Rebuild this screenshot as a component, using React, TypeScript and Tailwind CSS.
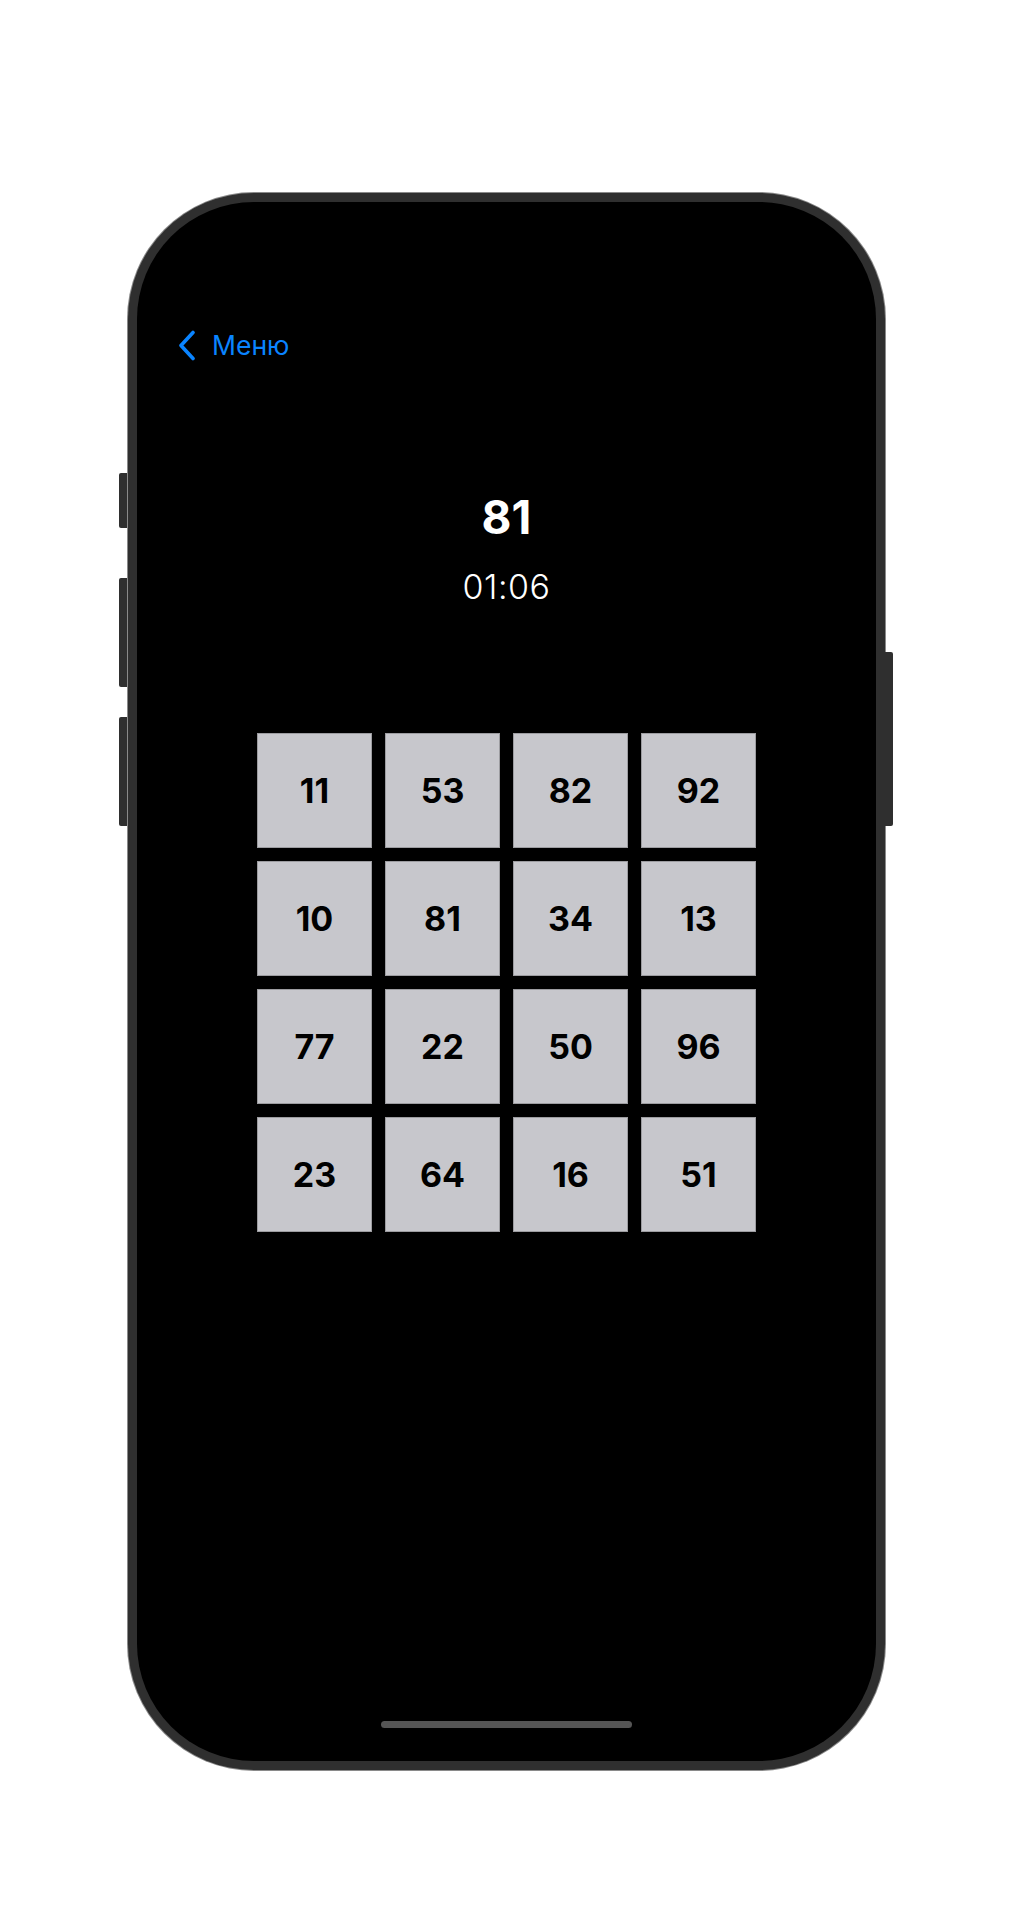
const cells = [11, 53, 82, 92, 10, 81, 34, 13, 77, 22, 50, 96, 23, 64, 16, 51];

export default function App() {
  return (
    <div className="w-[1012px] h-[1916px] bg-white pt-[193px] pl-[119px] flex items-start font-['Inter','Noto_Sans',sans-serif]">
      {/* left hardware buttons */}
      <div className="w-[8px] mr-[1px] pt-[280px] flex flex-col">
        <div className="h-[55px] rounded-l-[2px] bg-[#2f2f2f]" />
        <div className="mt-[50px] h-[109px] rounded-l-[2px] bg-[#2f2f2f]" />
        <div className="mt-[30px] h-[109px] rounded-l-[2px] bg-[#2f2f2f]" />
      </div>

      {/* phone body */}
      <div className="w-[757px] h-[1577px] rounded-[126px] bg-[#2f2f2f] p-[9px] shadow-[0_0_0_1px_#8a8a8a]">
        <div className="flex flex-col w-full h-full rounded-[117px] bg-black overflow-hidden">
          {/* nav */}
          <div className="mt-[123px] h-[40px] flex items-center pl-[41px] gap-[16px] text-[#0a84ff]">
            <svg width="18" height="31" viewBox="0 0 18 31" fill="none">
              <path d="M15 2.5 L3 15.5 L15 28.5" stroke="currentColor" strokeWidth="3.6" strokeLinecap="round" strokeLinejoin="round" />
            </svg>
            <span className="text-[26.5px] leading-none">Меню</span>
          </div>

          {/* target + timer */}
          <div className="mt-[129px] text-center text-white text-[46px] font-bold leading-none">81</div>
          <div className="mt-[30px] text-center text-white text-[34px] font-light leading-none tracking-[0.5px]">01:06</div>

          {/* grid */}
          <div className="mt-[129px] mx-auto grid grid-cols-4 gap-[13px]">
            {cells.map((n) => (
              <div
                key={n}
                className="w-[115px] h-[115px] flex items-center justify-center bg-[#c7c7cc] border border-[#9c9ca0] text-black text-[34px] font-bold"
              >
                {n}
              </div>
            ))}
          </div>

          {/* home indicator */}
          <div className="mt-auto mb-[33px] mx-auto w-[251px] h-[7px] rounded-full bg-[#555555]" />
        </div>
      </div>

      {/* right hardware button */}
      <div className="w-[8px] mt-[459px] h-[174px] rounded-r-[2px] bg-[#2f2f2f]" />
    </div>
  );
}
